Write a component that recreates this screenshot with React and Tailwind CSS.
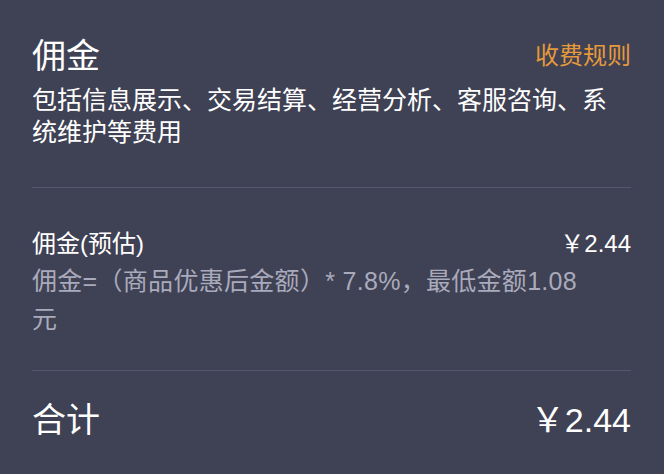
const FONT = { fontFamily: '"Liberation Sans", "Noto Sans CJK SC", sans-serif' };

export default function App() {
  return (
    <div className="min-h-[474px] w-[664px] bg-[#3f4154] pl-8 pr-[33px] text-white" style={FONT}>
      <div className="pt-9 pb-[39px]">
        <div className="flex items-center justify-between">
          <h1 className="text-[34px] leading-[40px]">佣金</h1>
          <a className="text-[24px] leading-[40px] text-[#e6993b]">收费规则</a>
        </div>
        <p className="mt-2 text-[25px] leading-[32px]">
          包括信息展示、交易结算、经营分析、客服咨询、系统维护等费用
        </p>
      </div>

      <div className="border-t border-[#55576d] pt-[38px] pb-[32px]">
        <div className="flex items-center justify-between">
          <span className="text-[24px] leading-[36px]">佣金(预估)</span>
          <span className="text-[24px] leading-[36px]">￥2.44</span>
        </div>
        <p className="max-w-[560px] text-[25px] leading-[38px] tracking-[0.3px] text-[#a9aabb]">
          佣金=（商品优惠后金额）* 7.8%，最低金额1.08<wbr />元
        </p>
      </div>

      <div className="flex items-center justify-between border-t border-[#55576d] pt-[29px]">
        <span className="text-[34px] leading-[40px]">合计</span>
        <span className="text-[34px] leading-[40px]">￥2.44</span>
      </div>
    </div>
  );
}
